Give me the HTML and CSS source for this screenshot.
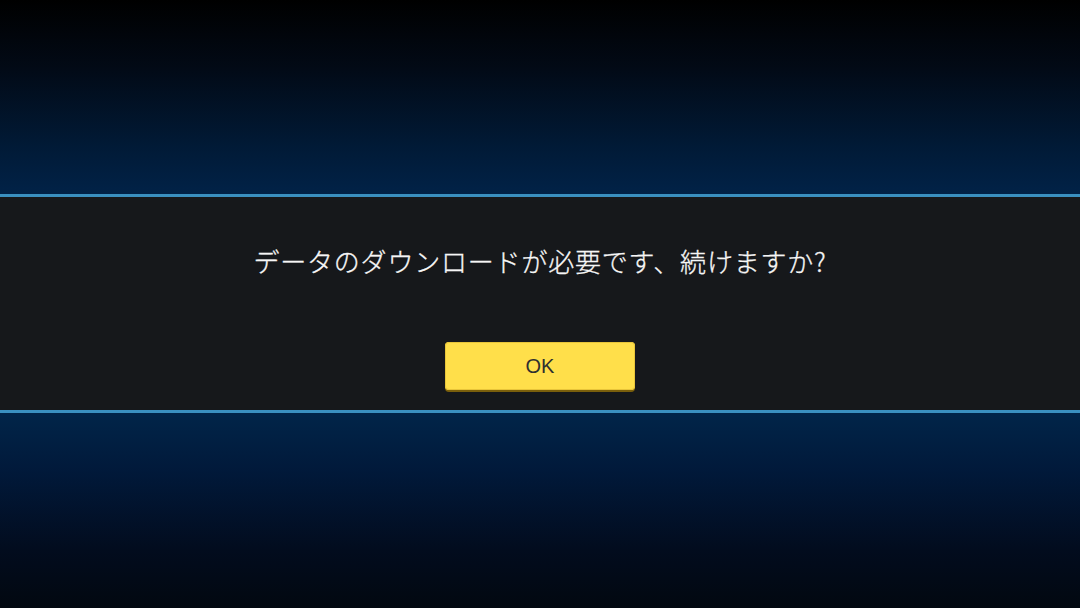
FILE: index.html
```html
<!DOCTYPE html>
<html lang="ja">
<head>
    <meta charset="UTF-8">
    <meta name="viewport" content="width=device-width, initial-scale=1.0">
    <title>Download</title>
    <link rel="stylesheet" href="styles.css">
</head>
<body>
<div class="screen">
    <div class="sky-top"></div>
    <div class="dialog">
        <p class="message">データのダウンロードが必要です、続けますか?</p>
        <button class="ok-button">OK</button>
    </div>
    <div class="sky-bottom"></div>
</div>
</body>
</html>
```

FILE: styles.css
```css
* {
    margin: 0;
    padding: 0;
    box-sizing: border-box;
}

body {
    font-family: "Noto Sans CJK JP", "Noto Sans", sans-serif;
    background: #000;
    width: 1080px;
    height: 608px;
    overflow: hidden;
}

.screen {
    display: flex;
    flex-direction: column;
    height: 608px;
}

.sky-top {
    height: 194px;
    background: linear-gradient(to bottom, #000000 0%, #020a16 35%, #011a36 75%, #012247 100%);
}

.sky-bottom {
    flex: 1;
    background: linear-gradient(to bottom, #012549 0%, #01193a 30%, #020c1e 70%, #020810 100%);
}

.dialog {
    height: 219px;
    background: #16181b;
    border-top: 3px solid #3a90c0;
    border-bottom: 3px solid #3a90c0;
    display: flex;
    flex-direction: column;
    align-items: center;
    padding-top: 45px;
}

.message {
    color: #f6f6f6;
    font-size: 26px;
    font-weight: 300;
    letter-spacing: 0.8px;
    line-height: 38px;
    -webkit-text-stroke: 0.3px #f6f6f6;
}

.ok-button {
    margin-top: 62px;
    width: 190px;
    height: 48px;
    background: #ffdf4a;
    border: none;
    border-radius: 4px;
    box-shadow: 0 2px 0 #7a5f0c, inset 0 0 0 1px #e8c53a;
    color: #2f2f2f;
    font-family: "Liberation Sans", Arial, sans-serif;
    font-size: 20px;
    cursor: pointer;
}
```
